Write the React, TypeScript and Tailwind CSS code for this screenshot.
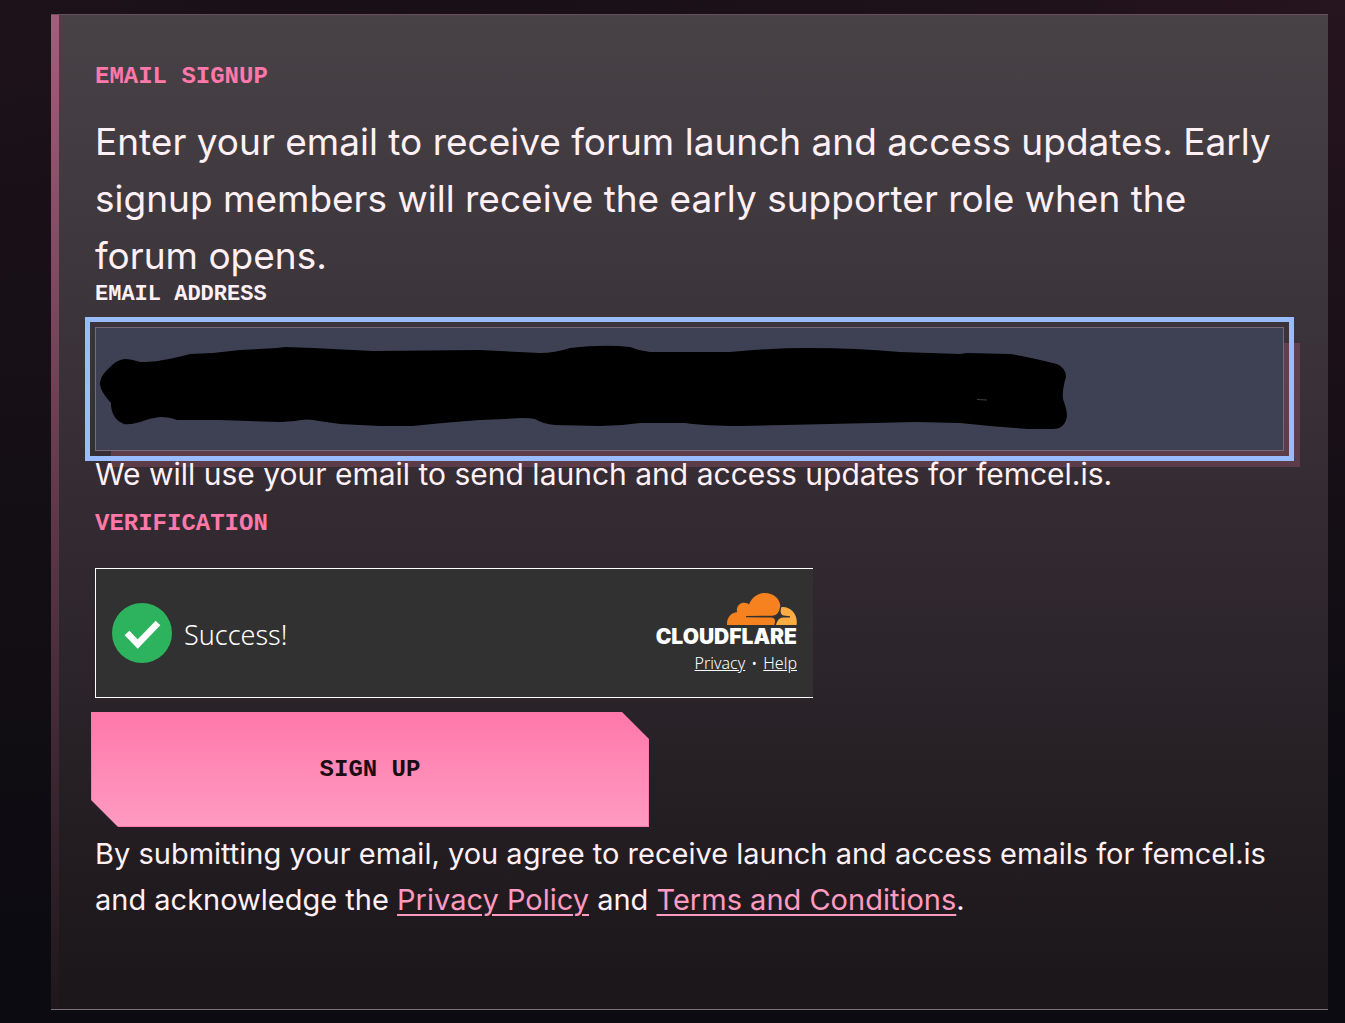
import { useState } from 'react';
import type { FormEvent } from 'react';

function CloudflareMark() {
    return (
        <svg viewBox="0 0 70 32" className="h-8 w-[70px]" aria-hidden="true">
            <path
                fill="#f6821f"
                d="M0 32 C-.5 25 4 19.5 10 19.3 C9 13 13 9.7 17 9.7 C19.500 9.700 21 10.500 22 11.500 C25 4 31 0 38 0 C46 0 52.500 5 53.300 12.500 C52.500 19 50 22.700 45 22.700 L19 22.900 L19 24.300 L45 24.500 C48.500 25 48.500 28 47.300 32 Z"
            />
            <path
                fill="#fbad41"
                d="M54.500 14 C63.500 13 71.500 21.500 69.500 32 L49 32 C50 27.500 52.500 24.500 56 24.500 L63 24.500 L63 23.300 L56.500 22.500 C53.500 21.500 52.800 18.500 54.500 14 Z"
            />
        </svg>
    );
}

function CheckBadge() {
    return (
        <svg viewBox="0 0 60 60" className="h-15 w-15 shrink-0" aria-hidden="true">
            <circle cx="30" cy="30" r="30" fill="#2db35e" />
            <path d="M15 30 L25.700 41 L46 20" fill="none" stroke="#fff" strokeWidth="6.500" />
        </svg>
    );
}

function Redaction() {
    return (
        <svg
            viewBox="0 0 1189 124"
            className="pointer-events-none absolute top-0 left-0 h-[124px] w-[1189px]"
            aria-hidden="true"
        >
            <path
                d="M5 57 Q5 50 12 43 Q22 32 30 32 Q36 32 45 35 Q58 35 68 33 Q80 31 95 27 L118 26 L145 23 L182 21 L190 20 L218 21 L278 24 L385 23 L445 26 Q460 26 475 21 Q510 17 535 20 Q545 24 555 25 L635 25 Q675 21 715 21 Q760 21 805 25 L865 27 L872 26 L915 27 Q930 29 962 37 Q971 41 971 50 Q967 63 968 72 Q972 83 972 89 Q970 102 958 102 L932 102 L895 99 L865 96 L820 95 L735 97 L645 99 Q610 99 590 96 L545 96 Q525 99 505 99 L460 98 Q448 97 440 92 Q430 90 410 92 L385 93 Q345 96 318 99 L285 99 L245 97 L224 94 Q212 91 200 94 L185 95 L125 93 L82 93 Q75 90 65 90 Q55 91 45 95 Q35 98 29 97 Q16 92 16 76 Q5 64 5 57 Z"
            />
            <path d="M882 72.500 L892 73" stroke="#3d4154" fill="none" />
        </svg>
    );
}

export default function App() {
    const [email, setEmail] = useState('');

    const handleSubmit = (event: FormEvent) => {
        event.preventDefault();
    };

    return (
        <main className="min-h-screen bg-[#0c0b11] bg-[radial-gradient(ellipse_at_top_right,#26141e,transparent_55%),radial-gradient(ellipse_at_top_left,#1d1219,transparent_65%)] pt-[14px] pr-[17px] pb-[13px] pl-[51px] font-['Inter',sans-serif] text-[#fff0f6]">
            <section className="flex border-t border-b border-t-[#6b4d5c] border-b-[#7c6f76] bg-linear-to-b from-[#484247] via-[#332b31] to-[#1b161a]">
                <div className="w-2 shrink-0 bg-linear-to-b from-[#a75c7d] to-[#1f171c]" />
                <form onSubmit={handleSubmit} className="min-w-0 grow px-9 pt-[46px] pr-11 pb-[86px]">
                    <h2 className="font-['Liberation_Mono',monospace] text-2xl leading-8 font-bold text-[#ff78aa]">
                        EMAIL SIGNUP
                    </h2>
                    <p className="mt-5 text-[37px] leading-[57px]">
                        Enter your email to receive forum launch and access updates. Early signup members
                        will receive the early supporter role when the forum opens.
                    </p>
                    <label
                        htmlFor="email"
                        className="block font-['Liberation_Mono',monospace] text-[22px] leading-[22px] font-bold"
                    >
                        EMAIL ADDRESS
                    </label>
                    <div className="relative mt-[21px]">
                        <input
                            id="email"
                            type="email"
                            value={email}
                            onChange={(event) => setEmail(event.target.value)}
                            className="block h-[124px] w-full border border-[#766b79] bg-[#3e4154] px-6 text-[37px] shadow-[16px_16px_0_#ff78aa33] outline-5 outline-offset-5 outline-[#99bbff]"
                        />
                        <Redaction />
                    </div>
                    <p className="relative text-[30px] leading-[46px]">
                        We will use your email to send launch and access updates for femcel.is.
                    </p>
                    <h3 className="mt-[11px] font-['Liberation_Mono',monospace] text-2xl leading-8 font-bold text-[#ff78aa]">
                        VERIFICATION
                    </h3>

                    {/* Turnstile */}
                    <div className="mt-7 flex h-[130px] w-[718px] max-w-full items-center justify-between border border-r-0 border-white bg-[#313131] px-4 font-['Noto_Sans',sans-serif] font-light text-white">
                        <div className="flex items-center gap-3">
                            <CheckBadge />
                            <span className="pt-1 text-[27px]">Success!</span>
                        </div>
                        <div className="flex flex-col items-end pt-1">
                            <CloudflareMark />
                            <span className="font-['Inter',sans-serif] text-[21px] leading-6 font-black">
                                CLOUDFLARE
                            </span>
                            <span className="flex gap-[6px] text-base leading-7">
                                <a href="#privacy" className="underline">Privacy</a>
                                <span>•</span>
                                <a href="#help" className="underline">Help</a>
                            </span>
                        </div>
                    </div>

                    <button
                        type="submit"
                        className="mt-[14px] -ml-1 block h-[115px] w-[558px] max-w-full border border-[#ff78aa] bg-linear-to-b from-[#ff78aa] to-[#ff9ac0] font-['Liberation_Mono',monospace] text-2xl font-bold text-[#1a0d14] [clip-path:polygon(0_0,calc(100%-27px)_0,100%_27px,100%_100%,27px_100%,0_calc(100%-27px))]"
                    >
                        SIGN UP
                    </button>
                    <p className="mt-1 text-[29px] leading-[46px]">
                        By submitting your email, you agree to receive launch and access emails for femcel.is
                        and acknowledge the{' '}
                        <a href="#privacy-policy" className="text-[#ff9ac0] underline decoration-2 underline-offset-4">Privacy Policy</a>
                        {' '}and{' '}
                        <a href="#terms" className="text-[#ff9ac0] underline decoration-2 underline-offset-4">Terms and Conditions</a>.
                    </p>
                </form>
            </section>
        </main>
    );
}
